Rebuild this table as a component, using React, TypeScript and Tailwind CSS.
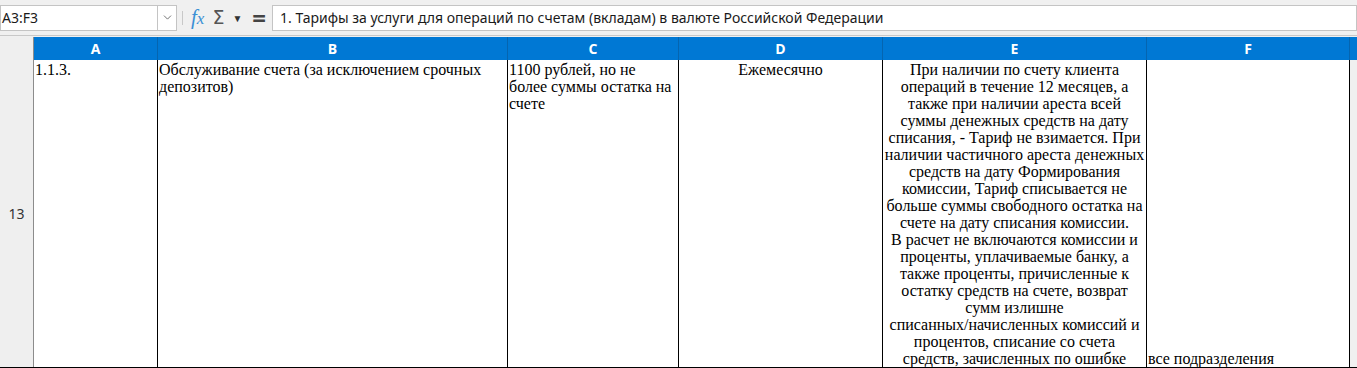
import React from 'react';
import { ChevronDown } from 'lucide-react';

const serif = "font-['Liberation_Serif','Times_New_Roman',serif] text-[16px] leading-[17px] text-black";

const columns = [
  { id: 'A', w: 'w-[124px]' },
  { id: 'B', w: 'w-[350px]' },
  { id: 'C', w: 'w-[171px]' },
  { id: 'D', w: 'w-[204px]' },
  { id: 'E', w: 'w-[264px]' },
  { id: 'F', w: 'w-[203px]' },
];

const eLines = [
  'При наличии по счету клиента',
  'операций в течение 12 месяцев, а',
  'также при наличии ареста всей',
  'суммы денежных средств на дату',
  'списания, - Тариф не взимается. При',
  'наличии частичного ареста денежных',
  'средств на дату Формирования',
  'комиссии, Тариф списывается не',
  'больше суммы свободного остатка на',
  'счете на дату списания комиссии.',
  'В расчет не включаются комиссии и',
  'проценты, уплачиваемые банку, а',
  'также проценты, причисленные к',
  'остатку средств на счете, возврат',
  'сумм излишне',
  'списанных/начисленных комиссий и',
  'процентов, списание со счета',
  'средств, зачисленных по ошибке',
];

function FormulaBar() {
  return (
    <div className="flex h-[36px] items-center bg-[#f0f0f0] border-b border-[#c8c8c8] font-['Noto_Sans','Open_Sans',sans-serif]">
      <div className="flex h-[26px] w-[177px] items-stretch border border-[#c4c4c4] bg-white">
        <div className="flex flex-1 items-center pl-[1px] text-[14px] text-[#1a1a1a]">A3:F3</div>
        <div className="flex w-[19px] items-center justify-center border-l border-[#c4c4c4] bg-white">
          <ChevronDown className="h-[13px] w-[13px] text-[#555]" strokeWidth={1.5} />
        </div>
      </div>
      <div className="mx-[5px] h-[14px] w-px bg-[#c8c8c8]" />
      <div className="flex items-center gap-[8px] pl-[3px]">
        <span className="font-['Liberation_Serif',serif] text-[21px] italic leading-none text-[#3a8fd4]">
          f<span className="text-[17px]">x</span>
        </span>
        <span className="font-['DejaVu_Sans',sans-serif] text-[19px] leading-none text-[#555]">Σ</span>
        <span className="text-[10px] leading-none text-[#333]">▼</span>
        <span className="ml-[2px] text-[24px] font-bold leading-none text-[#444]">=</span>
      </div>
      <div className="ml-[6px] flex h-[26px] flex-1 items-center border border-[#c4c4c4] bg-white pl-[7px] text-[14px] text-[#1a1a1a]">
        1. Тарифы за услуги для операций по счетам (вкладам) в валюте Российской Федерации
      </div>
    </div>
  );
}

export default function App() {
  return (
    <div className="h-[368px] w-[1357px] overflow-hidden bg-[#f0f0f0]">
      <FormulaBar />
      <div className="flex h-[24px] pt-px">
        <div className="w-[34px] border-r border-[#8c8c8c] bg-[#efefef]" />
        {columns.map((c) => (
          <div
            key={c.id}
            className={`${c.w} flex items-center justify-center border-r border-[#0565b0] bg-[#0078d4] font-['Open_Sans','Noto_Sans',sans-serif] text-[14px] font-bold text-white`}
          >
            {c.id}
          </div>
        ))}
        <div className="flex-1 bg-[#0078d4]" />
      </div>
      <div className="flex h-[308px] border-b border-black">
        <div className="flex w-[34px] items-center justify-center border-r border-[#8c8c8c] bg-[#efefef] font-['Noto_Sans','Open_Sans',sans-serif] text-[14px] text-[#333]">
          13
        </div>
        <div className={`w-[124px] border-r border-black bg-white pl-[1px] pt-[1px] ${serif}`}>1.1.3.</div>
        <div className={`w-[350px] border-r border-black bg-white pl-[1px] pt-[1px] ${serif}`}>
          Обслуживание счета (за исключением срочных
          <br />
          депозитов)
        </div>
        <div className={`w-[171px] border-r border-black bg-white pl-[1px] pt-[1px] ${serif}`}>
          1100 рублей, но не
          <br />
          более суммы остатка на
          <br />
          счете
        </div>
        <div className={`w-[204px] border-r border-black bg-white pt-[1px] text-center ${serif}`}>Ежемесячно</div>
        <div className={`w-[264px] overflow-hidden border-r border-black bg-white pt-[1px] text-center ${serif}`}>
          {eLines.map((l, i) => (
            <div key={i} className="whitespace-nowrap">
              {l}
            </div>
          ))}
        </div>
        <div className={`flex w-[203px] items-end border-r border-black bg-white pl-[1px] ${serif}`}>
          все подразделения
        </div>
        <div className="flex-1 bg-[#f0f0f0]" />
      </div>
    </div>
  );
}
